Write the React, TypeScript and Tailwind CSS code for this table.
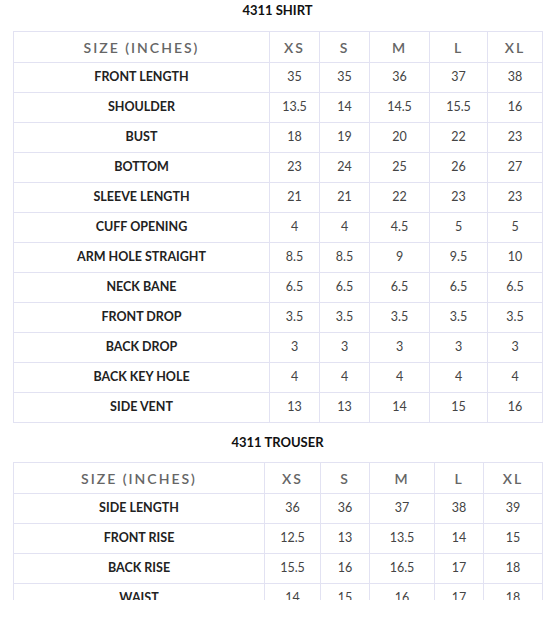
const shirt: [string, (string | number)[]][] = [
  ['FRONT LENGTH', [35, 35, 36, 37, 38]],
  ['SHOULDER', [13.5, 14, 14.5, 15.5, 16]],
  ['BUST', [18, 19, 20, 22, 23]],
  ['BOTTOM', [23, 24, 25, 26, 27]],
  ['SLEEVE LENGTH', [21, 21, 22, 23, 23]],
  ['CUFF OPENING', [4, 4, 4.5, 5, 5]],
  ['ARM HOLE STRAIGHT', [8.5, 8.5, 9, 9.5, 10]],
  ['NECK BANE', [6.5, 6.5, 6.5, 6.5, 6.5]],
  ['FRONT DROP', [3.5, 3.5, 3.5, 3.5, 3.5]],
  ['BACK DROP', [3, 3, 3, 3, 3]],
  ['BACK KEY HOLE', [4, 4, 4, 4, 4]],
  ['SIDE VENT', [13, 13, 14, 15, 16]],
];

const trouser: [string, (string | number)[]][] = [
  ['SIDE LENGTH', [36, 36, 37, 38, 39]],
  ['FRONT RISE', [12.5, 13, 13.5, 14, 15]],
  ['BACK RISE', [15.5, 16, 16.5, 17, 18]],
  ['WAIST', [14, 15, 16, 17, 18]],
];

const sizes = ['XS', 'S', 'M', 'L', 'XL'];

function SizeTable({ rows, widths }: { rows: [string, (string | number)[]][]; widths: number[] }) {
  return (
    <table className="table-fixed border-collapse w-[529px] text-center">
      <colgroup>
        {widths.map((w, i) => (
          <col key={i} style={{ width: w }} />
        ))}
      </colgroup>
      <thead>
        <tr className="h-[31px]">
          <th className="border border-[#e2e2f2] text-[14px] font-semibold tracking-[2px] text-[#666]">SIZE (INCHES)</th>
          {sizes.map((s) => (
            <th key={s} className="border border-[#e2e2f2] text-[14px] font-semibold tracking-[2px] text-[#666]">
              {s}
            </th>
          ))}
        </tr>
      </thead>
      <tbody>
        {rows.map(([label, vals]) => (
          <tr key={label} className="h-[30px]">
            <td className="border border-[#e2e2f2] text-[12.5px] font-bold text-[#222]">{label}</td>
            {vals.map((v, i) => (
              <td key={i} className="border border-[#e2e2f2] text-[12.5px] text-[#444]">
                {v}
              </td>
            ))}
          </tr>
        ))}
      </tbody>
    </table>
  );
}

export default function App() {
  return (
    <div className="w-[550px] h-[600px] overflow-hidden bg-white font-['Lato',sans-serif]">
      <div className="pl-[13px]">
        <h2 className="w-[529px] text-center text-[13px] font-bold text-[#111] pt-[1px] h-[31px] leading-[18px]">4311 SHIRT</h2>
        <SizeTable rows={shirt} widths={[256, 50, 50, 60, 58, 55]} />
        <h2 className="w-[529px] text-center text-[13px] font-bold text-[#111] pt-[10px] h-[39px] leading-[18px]">4311 TROUSER</h2>
        <SizeTable rows={trouser} widths={[251, 56, 49, 65, 49, 59]} />
      </div>
    </div>
  );
}
